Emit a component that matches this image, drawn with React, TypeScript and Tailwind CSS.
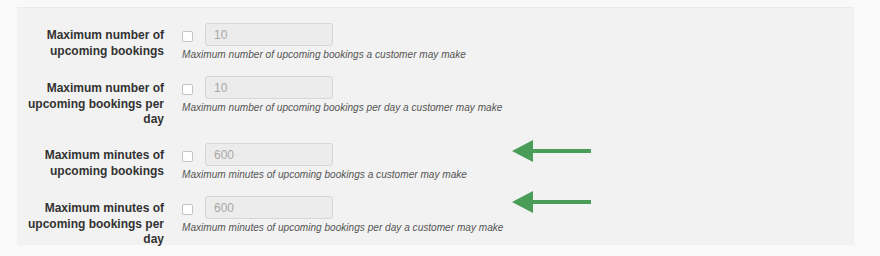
const rows = [
  {
    label: ["Maximum number of", "upcoming bookings"],
    value: "10",
    desc: "Maximum number of upcoming bookings a customer may make",
    h: "h-[53px]",
    arrow: "",
  },
  {
    label: ["Maximum number of", "upcoming bookings per", "day"],
    value: "10",
    desc: "Maximum number of upcoming bookings per day a customer may make",
    h: "h-[67px]",
    arrow: "",
  },
  {
    label: ["Maximum minutes of", "upcoming bookings"],
    value: "600",
    desc: "Maximum minutes of upcoming bookings a customer may make",
    h: "h-[53px]",
    arrow: "top-[-4px]",
  },
  {
    label: ["Maximum minutes of", "upcoming bookings per", "day"],
    value: "600",
    desc: "Maximum minutes of upcoming bookings per day a customer may make",
    h: "h-[52px]",
    arrow: "top-[-6px]",
  },
];

const Arrow = ({ pos }: { pos: string }) => (
  <svg width="80" height="24" viewBox="0 0 80 24" className={`absolute left-[495px] ${pos}`}>
    <polygon points="0,12 21,1 21,23" fill="#4a9d59" />
    <rect x="20" y="10" width="59" height="4" fill="#4a9d59" />
  </svg>
);

const Row = ({ row }: { row: (typeof rows)[number] }) => (
  <div className={`flex ${row.h} relative`}>
    <div className="w-[147px] shrink-0 pt-[5px] text-right text-[12px] font-bold leading-[15.5px] text-[#333]">
      {row.label.map((l) => (
        <div key={l}>{l}</div>
      ))}
    </div>
    <div className="ml-[18px] flex flex-col">
      <div className="flex items-center">
        <span className="mt-[3px] h-[11px] w-[11px] rounded-[2px] border border-[#c4c4c4] bg-white" />
        <div className="ml-[12px] flex h-[23px] w-[128px] items-center rounded-[3px] border border-[#d6d6d6] bg-[#ececec] pl-[8px] text-[12px] text-[#a8a8a8]">
          {row.value}
        </div>
      </div>
      <div className="mt-[2px] text-[10.1px] italic leading-[13px] text-[#555]">{row.desc}</div>
    </div>
    {row.arrow && <Arrow pos={row.arrow} />}
  </div>
);

export default function App() {
  return (
    <div className="h-[256px] w-[880px] overflow-hidden bg-[#f9f9f9] pt-[7px] font-['Liberation_Sans',Arial,sans-serif]">
      <div className="ml-[17px] h-[238px] w-[837px] border-t border-[#ebebeb] bg-[#f2f2f2] pt-[15px]">
        {rows.map((r) => (
          <Row key={r.desc} row={r} />
        ))}
      </div>
    </div>
  );
}
